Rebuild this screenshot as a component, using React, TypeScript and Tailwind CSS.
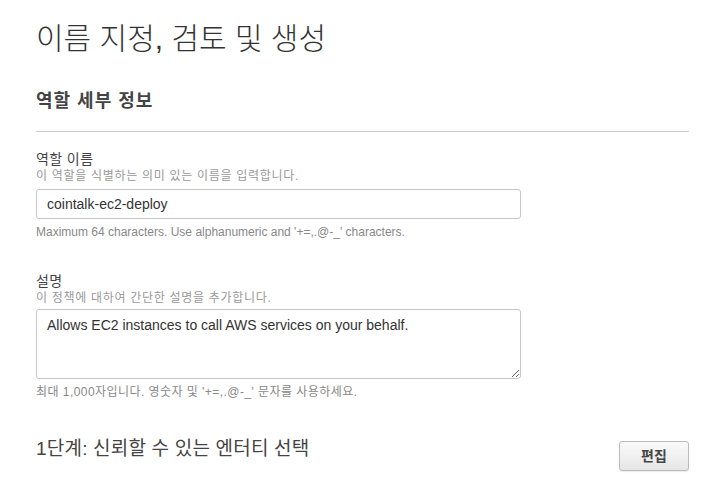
import { useState } from "react";

const FONT = "font-['Liberation_Sans','Noto_Sans_CJK_KR',sans-serif]";

function Field({
  label,
  hint,
  help,
  helpClass = "",
  children,
}: {
  label: string;
  hint: string;
  help: string;
  helpClass?: string;
  children: React.ReactNode;
}) {
  return (
    <div className="flex flex-col">
      <label className="text-[14px] leading-[18px] tracking-[0.4px] text-[#444]">{label}</label>
      <p className="text-[12px] leading-[16px] tracking-[0.7px] text-[#999]">{hint}</p>
      <div className="mt-[5px]">{children}</div>
      <p className={`mt-[5px] text-[12px] leading-[16px] text-[#888] ${helpClass}`}>{help}</p>
    </div>
  );
}

export default function App() {
  const [name, setName] = useState("cointalk-ec2-deploy");
  const [desc, setDesc] = useState("Allows EC2 instances to call AWS services on your behalf.");

  return (
    <div className={`min-h-[490px] w-[711px] bg-white pl-[36px] pr-[22px] pt-[19px] ${FONT}`}>
      <h1 className="text-[30px] font-light leading-[40px] text-[#333]">이름 지정, 검토 및 생성</h1>

      <h2 className="mt-[30px] text-[18px] font-bold leading-[24px] tracking-[1px] text-[#444]">역할 세부 정보</h2>
      <hr className="mt-[18px] border-t border-[#ccc]" />

      <div className="mt-[18px] flex flex-col gap-[32px]">
        <Field
          label="역할 이름"
          hint="이 역할을 식별하는 의미 있는 이름을 입력합니다."
          help="Maximum 64 characters. Use alphanumeric and '+=,.@-_' characters."
        >
          <input
            value={name}
            onChange={(e) => setName(e.target.value)}
            className="h-[30px] w-[485px] rounded-[3px] border border-[#c8c8c8] px-[10px] text-[14px] text-[#333] outline-none"
          />
        </Field>

        <Field
          label="설명"
          hint="이 정책에 대하여 간단한 설명을 추가합니다."
          help="최대 1,000자입니다. 영숫자 및 '+=,.@-_' 문자를 사용하세요."
          helpClass="tracking-[0.45px]"
        >
          <textarea
            value={desc}
            spellCheck={false}
            onChange={(e) => setDesc(e.target.value)}
            className="-mt-[2px] block h-[70px] w-[485px] resize rounded-[3px] border border-[#c8c8c8] px-[10px] py-[6px] text-[14px] leading-[18px] text-[#333] outline-none"
          />
        </Field>
      </div>

      <div className="mt-[36px] flex items-start justify-between">
        <h3 className="text-[19px] leading-[26px] tracking-[0.2px] text-[#444]">1단계: 신뢰할 수 있는 엔터티 선택</h3>
        <button
          type="button"
          className="mt-[5px] h-[30px] w-[70px] rounded-[3px] border border-[#bbb] bg-gradient-to-b from-[#fafafa] to-[#e6e6e6] text-[14px] font-bold text-[#444] shadow-[0_1px_1px_rgba(0,0,0,0.08)]"
        >
          편집
        </button>
      </div>
    </div>
  );
}
